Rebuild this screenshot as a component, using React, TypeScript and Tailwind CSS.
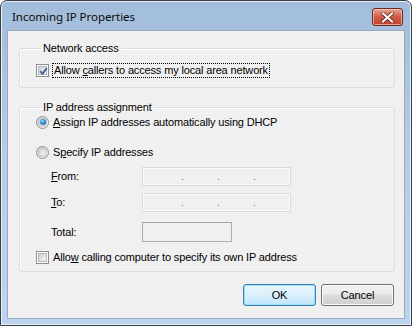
import React from "react";

const F = { fontFamily: "'Liberation Sans', Arial, sans-serif" };

function CheckBox({ checked }: { checked?: boolean }) {
  return (
    <div className="w-[13px] h-[13px] border border-[#8e8f8f] bg-white p-[1px] shrink-0">
      <div className="relative w-full h-full border border-[#b4b7b9] bg-gradient-to-br from-[#cbcfd5] to-[#f7f7f7]">
        {checked && (
          <svg className="absolute left-[0px] top-[0px]" width="9" height="9" viewBox="0 0 9 9">
            <path d="M1.2 4.2 L3.6 6.8 L7.8 1" fill="none" stroke="#4a5f97" strokeWidth="1.9" />
          </svg>
        )}
      </div>
    </div>
  );
}

function Radio({ checked }: { checked?: boolean }) {
  return (
    <div className="w-[13px] h-[13px] rounded-full border border-[#8e8f8f] bg-gradient-to-br from-[#cfd3d8] to-[#fafafa] flex items-center justify-center shrink-0">
      <div className="w-[9px] h-[9px] rounded-full border border-[#b8bcc0] bg-gradient-to-br from-[#d6d9dd] to-[#f4f4f4] flex items-center justify-center">
        {checked && (
          <div className="w-[6px] h-[6px] rounded-full bg-[radial-gradient(circle_at_40%_35%,#9fe3ff_0%,#2a8fd0_45%,#0c3f75_100%)]" />
        )}
      </div>
    </div>
  );
}

function IpBox() {
  return (
    <div className="w-[149px] h-[19px] border border-[#dadada] bg-[#f0f0f0] shadow-[inset_0_0_0_1px_#fbfbfb] flex items-end pb-[3px]">
      <div className="w-[38px]" />
      <span className="w-[36px] text-[#777] text-[10px] leading-none">.</span>
      <span className="w-[36px] text-[#777] text-[10px] leading-none">.</span>
      <span className="text-[#777] text-[10px] leading-none">.</span>
    </div>
  );
}

export default function App() {
  return (
    <div className="w-[412px] h-[326px] bg-[#ffffff] text-black text-[11px] tracking-[-0.15px]" style={F}>
      <div className="w-[412px] h-[326px] rounded-t-[7px] border border-[#3a3f45] bg-gradient-to-b from-[#a2bdda] via-[#b6cde6] to-[#bcd5ee] flex flex-col shadow-[inset_0_0_0_1px_#e8f1fa]">
        {/* Title bar */}
        <div className="h-[29px] flex items-center pl-[11px] pr-[8px] shrink-0">
          <span
            className="text-[11.5px] text-[#0b0b0b] leading-none mt-[3px] tracking-[-0.05px]"
            style={{ fontFamily: "'Noto Sans', 'Open Sans', sans-serif" }}
          >
            Incoming IP Properties
          </span>
          <div className="ml-auto mt-[3px] w-[31px] h-[18px] rounded-[3px] border border-[#6d2a22] bg-gradient-to-b from-[#e5a395] via-[#cf5a44] to-[#c2402b] flex items-center justify-center shadow-[inset_0_0_0_1px_rgba(255,220,210,0.6)]">
            <svg width="13" height="11" viewBox="0 0 13 11">
              <path d="M2 1.5 L11 9.5 M11 1.5 L2 9.5" stroke="#5a1a12" strokeWidth="3.6" strokeLinecap="square" />
              <path d="M2 1.5 L11 9.5 M11 1.5 L2 9.5" stroke="#ffffff" strokeWidth="2.2" strokeLinecap="square" />
            </svg>
          </div>
        </div>
        {/* Client */}
        <div className="mx-[6px] mb-[6px] flex-1 bg-[#f0f0f0] border border-[#95a9c0] flex flex-col pl-[11px] pr-[9px] pt-[11px]">
          <fieldset className="border border-[#d5dfe5] rounded-[3px] h-[46px] pl-[16px] shadow-[inset_1px_1px_0_#fff]">
            <legend className="ml-[5px] px-[2px] leading-[13px]">Network access</legend>
            <div className="flex items-center mt-[8px]">
              <CheckBox checked />
              <span className="ml-[3px] px-[1px] leading-[13px] border border-dotted border-black">
                Allow <u>c</u>allers to access my local area network
              </span>
            </div>
          </fieldset>

          <fieldset className="mt-[13px] border border-[#d5dfe5] rounded-[3px] h-[171px] pl-[16px] shadow-[inset_1px_1px_0_#fff]">
            <legend className="ml-[5px] px-[2px] leading-[13px]">IP address assignment</legend>
            <div className="flex items-center mt-[1px] h-[14px]">
              <Radio checked />
              <span className="ml-[4px]"><u>A</u>ssign IP addresses automatically using DHCP</span>
            </div>
            <div className="flex items-center mt-[16px] h-[14px]">
              <Radio />
              <span className="ml-[4px]">S<u>p</u>ecify IP addresses</span>
            </div>
            <div className="flex flex-col gap-[7px] mt-[8px] pl-[15px]">
              <div className="flex items-center">
                <span className="w-[91px]"><u>F</u>rom:</span>
                <IpBox />
              </div>
              <div className="flex items-center">
                <span className="w-[91px]"><u>T</u>o:</span>
                <IpBox />
              </div>
              <div className="flex items-center mt-[3px]">
                <span className="w-[91px]">Total:</span>
                <div className="w-[90px] h-[20px] border border-[#abadb3] border-t-[#9fa3aa] bg-[#f0f0f0]" />
              </div>
            </div>
            <div className="flex items-center mt-[7px]">
              <CheckBox />
              <span className="ml-[4px]">Allo<u>w</u> calling computer to specify its own IP address</span>
            </div>
          </fieldset>

          <div className="flex justify-end gap-[5px] mt-[12px] pr-[1px]">
            <button className="w-[73px] h-[22px] rounded-[3px] border border-[#3c7fb1] bg-gradient-to-b from-[#eaf6fd] via-[#d9f0fc] to-[#bee6fd] shadow-[inset_0_0_0_1px_#9ddcfc]">
              OK
            </button>
            <button className="w-[73px] h-[22px] rounded-[3px] border border-[#707070] bg-[linear-gradient(to_bottom,#f2f2f2_0%,#ebebeb_45%,#dddddd_50%,#cfcfcf_100%)] shadow-[inset_0_0_0_1px_#fcfcfc]">
              Cancel
            </button>
          </div>
        </div>
      </div>
    </div>
  );
}
